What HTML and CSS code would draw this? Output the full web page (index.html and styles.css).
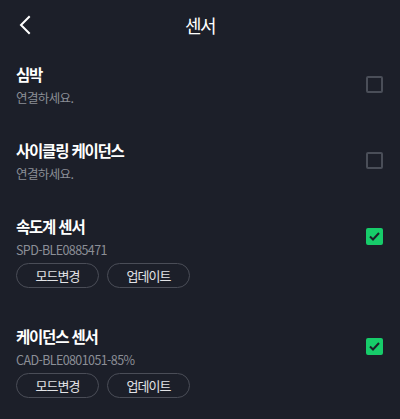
FILE: index.html
```html
<!DOCTYPE html>
<html lang="ko">
<head>
    <meta charset="UTF-8">
    <meta name="viewport" content="width=device-width, initial-scale=1.0">
    <title>센서</title>
    <link rel="stylesheet" href="styles.css">
</head>
<body>
    <header class="topbar">
        <button class="back" aria-label="뒤로">
            <svg width="14" height="20" viewBox="0 0 14 20">
                <path d="M11 2 L3 10 L11 18" fill="none" stroke="#ffffff" stroke-width="2" stroke-linecap="square"/>
            </svg>
        </button>
        <h1>센서</h1>
    </header>

    <div class="list">
        <div class="item">
            <div class="head">
                <div class="info">
                    <div class="name">심박</div>
                    <div class="sub">연결하세요.</div>
                </div>
                <span class="check"></span>
            </div>
        </div>

        <div class="item">
            <div class="head">
                <div class="info">
                    <div class="name">사이클링 케이던스</div>
                    <div class="sub">연결하세요.</div>
                </div>
                <span class="check"></span>
            </div>
        </div>

        <div class="item">
            <div class="head">
                <div class="info">
                    <div class="name">속도계 센서</div>
                    <div class="sub">SPD-BLE0885471</div>
                </div>
                <span class="check on">
                    <svg width="13" height="13" viewBox="0 0 13 13"><path d="M2 6.5 L5 9.5 L11 3" fill="none" stroke="#1c1f29" stroke-width="2"/></svg>
                </span>
            </div>
            <div class="actions">
                <button class="pill">모드변경</button>
                <button class="pill">업데이트</button>
            </div>
        </div>

        <div class="item">
            <div class="head">
                <div class="info">
                    <div class="name">케이던스 센서</div>
                    <div class="sub">CAD-BLE0801051-85%</div>
                </div>
                <span class="check on">
                    <svg width="13" height="13" viewBox="0 0 13 13"><path d="M2 6.5 L5 9.5 L11 3" fill="none" stroke="#1c1f29" stroke-width="2"/></svg>
                </span>
            </div>
            <div class="actions">
                <button class="pill">모드변경</button>
                <button class="pill">업데이트</button>
            </div>
        </div>
    </div>
</body>
</html>
```

FILE: styles.css
```css
html, body {
    margin: 0;
    padding: 0;
    background-color: #1c1f29;
}
body {
    font-family: "Noto Sans CJK KR", "Noto Sans", sans-serif;
    color: #ffffff;
    height: 419px;
    overflow: hidden;
}
.topbar {
    height: 47px;
    display: flex;
    align-items: center;
    justify-content: center;
    position: relative;
}
.topbar h1 {
    margin: 0;
    font-size: 18px;
    font-weight: 400;
    letter-spacing: -1.5px;
    line-height: 20px;
    margin-top: 2px;
}
.back {
    position: absolute;
    left: 18px;
    top: 15px;
    background: none;
    border: none;
    padding: 0;
    width: 14px;
    height: 20px;
}
.item {
    padding: 16px 16px 15px 16px;
}
.head {
    display: flex;
    align-items: center;
    justify-content: space-between;
}
.name {
    font-size: 15.5px;
    font-weight: 700;
    letter-spacing: -1.2px;
    line-height: 22px;
}
.sub {
    margin-top: 3px;
    font-size: 12.5px;
    letter-spacing: -0.6px;
    line-height: 20px;
    color: #8b8e96;
}
.check {
    width: 13px;
    height: 13px;
    border: 2px solid #4a4e58;
    border-radius: 2px;
    margin-right: 1px;
    margin-bottom: 3px;
    display: flex;
    align-items: center;
    justify-content: center;
}
.check.on {
    background-color: #17cc6a;
    border-color: #17cc6a;
}
.actions {
    display: flex;
    gap: 8px;
    margin-top: 3px;
    margin-bottom: 6px;
}
.pill {
    width: 83px;
    height: 25px;
    border: 1px solid #4a4d57;
    border-radius: 13px;
    background: none;
    color: #e2e3e6;
    font-family: inherit;
    font-size: 13px;
    letter-spacing: -1px;
    padding: 0;
}
```
